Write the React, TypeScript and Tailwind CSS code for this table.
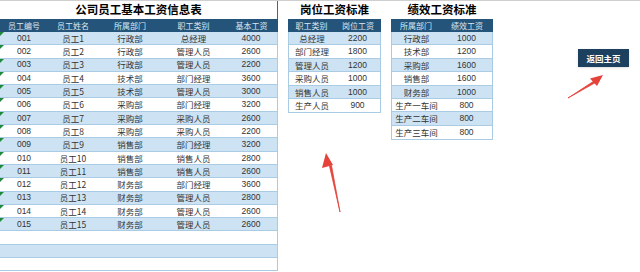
import React from 'react';

const FONT = { fontFamily: '"Liberation Sans", "Noto Sans CJK SC", sans-serif' };
const CJK = { fontFamily: '"Noto Sans CJK SC", "Liberation Sans", sans-serif' };

const staff: [string, string, string, string, string][] = [
  ['001', '员工1', '行政部', '总经理', '4000'],
  ['002', '员工2', '行政部', '管理人员', '2600'],
  ['003', '员工3', '行政部', '管理人员', '2200'],
  ['004', '员工4', '技术部', '部门经理', '3600'],
  ['005', '员工5', '技术部', '管理人员', '3000'],
  ['006', '员工6', '采购部', '部门经理', '3200'],
  ['007', '员工7', '采购部', '采购人员', '2600'],
  ['008', '员工8', '采购部', '采购人员', '2200'],
  ['009', '员工9', '销售部', '部门经理', '3200'],
  ['010', '员工10', '销售部', '销售人员', '2800'],
  ['011', '员工11', '销售部', '销售人员', '2600'],
  ['012', '员工12', '财务部', '部门经理', '3600'],
  ['013', '员工13', '财务部', '管理人员', '2800'],
  ['014', '员工14', '财务部', '管理人员', '2600'],
  ['015', '员工15', '财务部', '管理人员', '2600'],
];

const postPay: [string, string][] = [
  ['总经理', '2200'],
  ['部门经理', '1800'],
  ['管理人员', '1200'],
  ['采购人员', '1000'],
  ['销售人员', '1000'],
  ['生产人员', '900'],
];

const perfPay: [string, string][] = [
  ['行政部', '1000'],
  ['技术部', '1200'],
  ['采购部', '1600'],
  ['销售部', '1600'],
  ['财务部', '1000'],
  ['生产一车间', '800'],
  ['生产二车间', '800'],
  ['生产三车间', '800'],
];

const mainCols = ['w-[48px]', 'w-[50px]', 'w-[64px]', 'w-[63px]', 'flex-1'];

function Header({ labels, widths }: { labels: string[]; widths: string[] }) {
  return (
    <div className="flex h-[13px] bg-[#24547a] text-[#dde7f0] text-[8px]" style={CJK}>
      {labels.map((l, i) => (
        <div key={i} className={`${widths[i]} flex items-center justify-center leading-none`}>
          {l}
        </div>
      ))}
    </div>
  );
}

export default function App() {
  return (
    <div
      className="relative w-[640px] h-[272px] bg-white overflow-hidden border-t border-[#cfcfcf] flex items-start text-[#333]"
      style={FONT}
    >
      {/* Main table */}
      <div className="w-[278px] flex flex-col">
        <div
          className="h-[18px] border-r border-[#4d6b5c] flex items-center justify-center text-[11.5px] font-bold text-black"
          style={CJK}
        >
          公司员工基本工资信息表
        </div>
        <Header labels={['员工编号', '员工姓名', '所属部门', '职工类别', '基本工资']} widths={mainCols} />
        <div className="border-r border-b border-[#a9cbe4]">
          {staff.map((r, i) => (
            <div
              key={r[0]}
              className={`relative flex h-[13.3px] border-b border-[#a9cbe4] text-[8.5px] ${i % 2 === 0 ? 'bg-[#cde3f3]' : 'bg-white'}`}
            >
              <span className="absolute left-0 top-0 w-0 h-0 border-t-[4px] border-r-[4px] border-t-[#1e8a3c] border-r-transparent" />
              {r.map((c, j) => (
                <div
                  key={j}
                  className={`${mainCols[j]} flex items-center justify-center leading-none`}
                  style={j === 0 || j === 4 ? FONT : CJK}
                >
                  {c}
                </div>
              ))}
            </div>
          ))}
          <div className="h-[13.3px] border-b border-[#a9cbe4] bg-white" />
          <div className="h-[13.3px] border-b border-[#a9cbe4] bg-[#cde3f3]" />
          <div className="h-[12.3px] bg-white" />
        </div>
      </div>

      {/* 岗位工资标准 */}
      <div className="ml-[10px] w-[93px] flex flex-col">
        <div className="h-[18px] flex items-center justify-center text-[11.5px] font-bold text-black" style={CJK}>
          岗位工资标准
        </div>
        <Header labels={['职工类别', '岗位工资']} widths={['w-[47px]', 'flex-1']} />
        <div className="border-x border-b border-[#a9cbe4]">
          {postPay.map((r, i) => (
            <div
              key={r[0]}
              className={`flex h-[13.4px] text-[8.5px] ${i < postPay.length - 1 ? 'border-b border-[#a9cbe4]' : ''} ${i % 2 === 0 ? 'bg-[#cde3f3]' : 'bg-white'}`}
            >
              <div className="w-[46px] flex items-center justify-center leading-none" style={CJK}>{r[0]}</div>
              <div className="flex-1 flex items-center justify-center leading-none">{r[1]}</div>
            </div>
          ))}
        </div>
      </div>

      {/* 绩效工资标准 */}
      <div className="ml-[10px] w-[102px] flex flex-col">
        <div className="h-[18px] flex items-center justify-center text-[11.5px] font-bold text-black" style={CJK}>
          绩效工资标准
        </div>
        <Header labels={['所属部门', '绩效工资']} widths={['w-[50px]', 'flex-1']} />
        <div className="border-x border-b border-[#a9cbe4]">
          {perfPay.map((r, i) => (
            <div
              key={r[0]}
              className={`flex h-[13.4px] text-[8.5px] ${i < perfPay.length - 1 ? 'border-b border-[#a9cbe4]' : ''} ${i % 2 === 0 ? 'bg-[#cde3f3]' : 'bg-white'}`}
            >
              <div className="w-[49px] flex items-center justify-center leading-none" style={CJK}>{r[0]}</div>
              <div className="flex-1 flex items-center justify-center leading-none">{r[1]}</div>
            </div>
          ))}
        </div>
      </div>

      {/* 返回主页 button */}
      <div className="ml-[85px] mt-[48px]">
        <button
          className="w-[51px] h-[18px] bg-[#1d405e] text-white text-[8.5px] font-bold flex items-center justify-center shadow-sm"
          style={CJK}
        >
          返回主页
        </button>
      </div>

      {/* red arrows */}
      <svg className="absolute inset-0 pointer-events-none" width="640" height="272">
        <path d="M568 97 L594 80 L595.5 81.5 Z" fill="#e5423a" stroke="#e5423a" strokeWidth="0.8" />
        <polygon points="603,74 590,77.5 597,85" fill="#e5423a" />
        <path d="M340 211 L329.5 165 L331.5 164.5 Z" fill="#e5423a" stroke="#e5423a" strokeWidth="0.8" />
        <polygon points="326,152 322,167 333,164" fill="#e5423a" />
      </svg>
    </div>
  );
}
